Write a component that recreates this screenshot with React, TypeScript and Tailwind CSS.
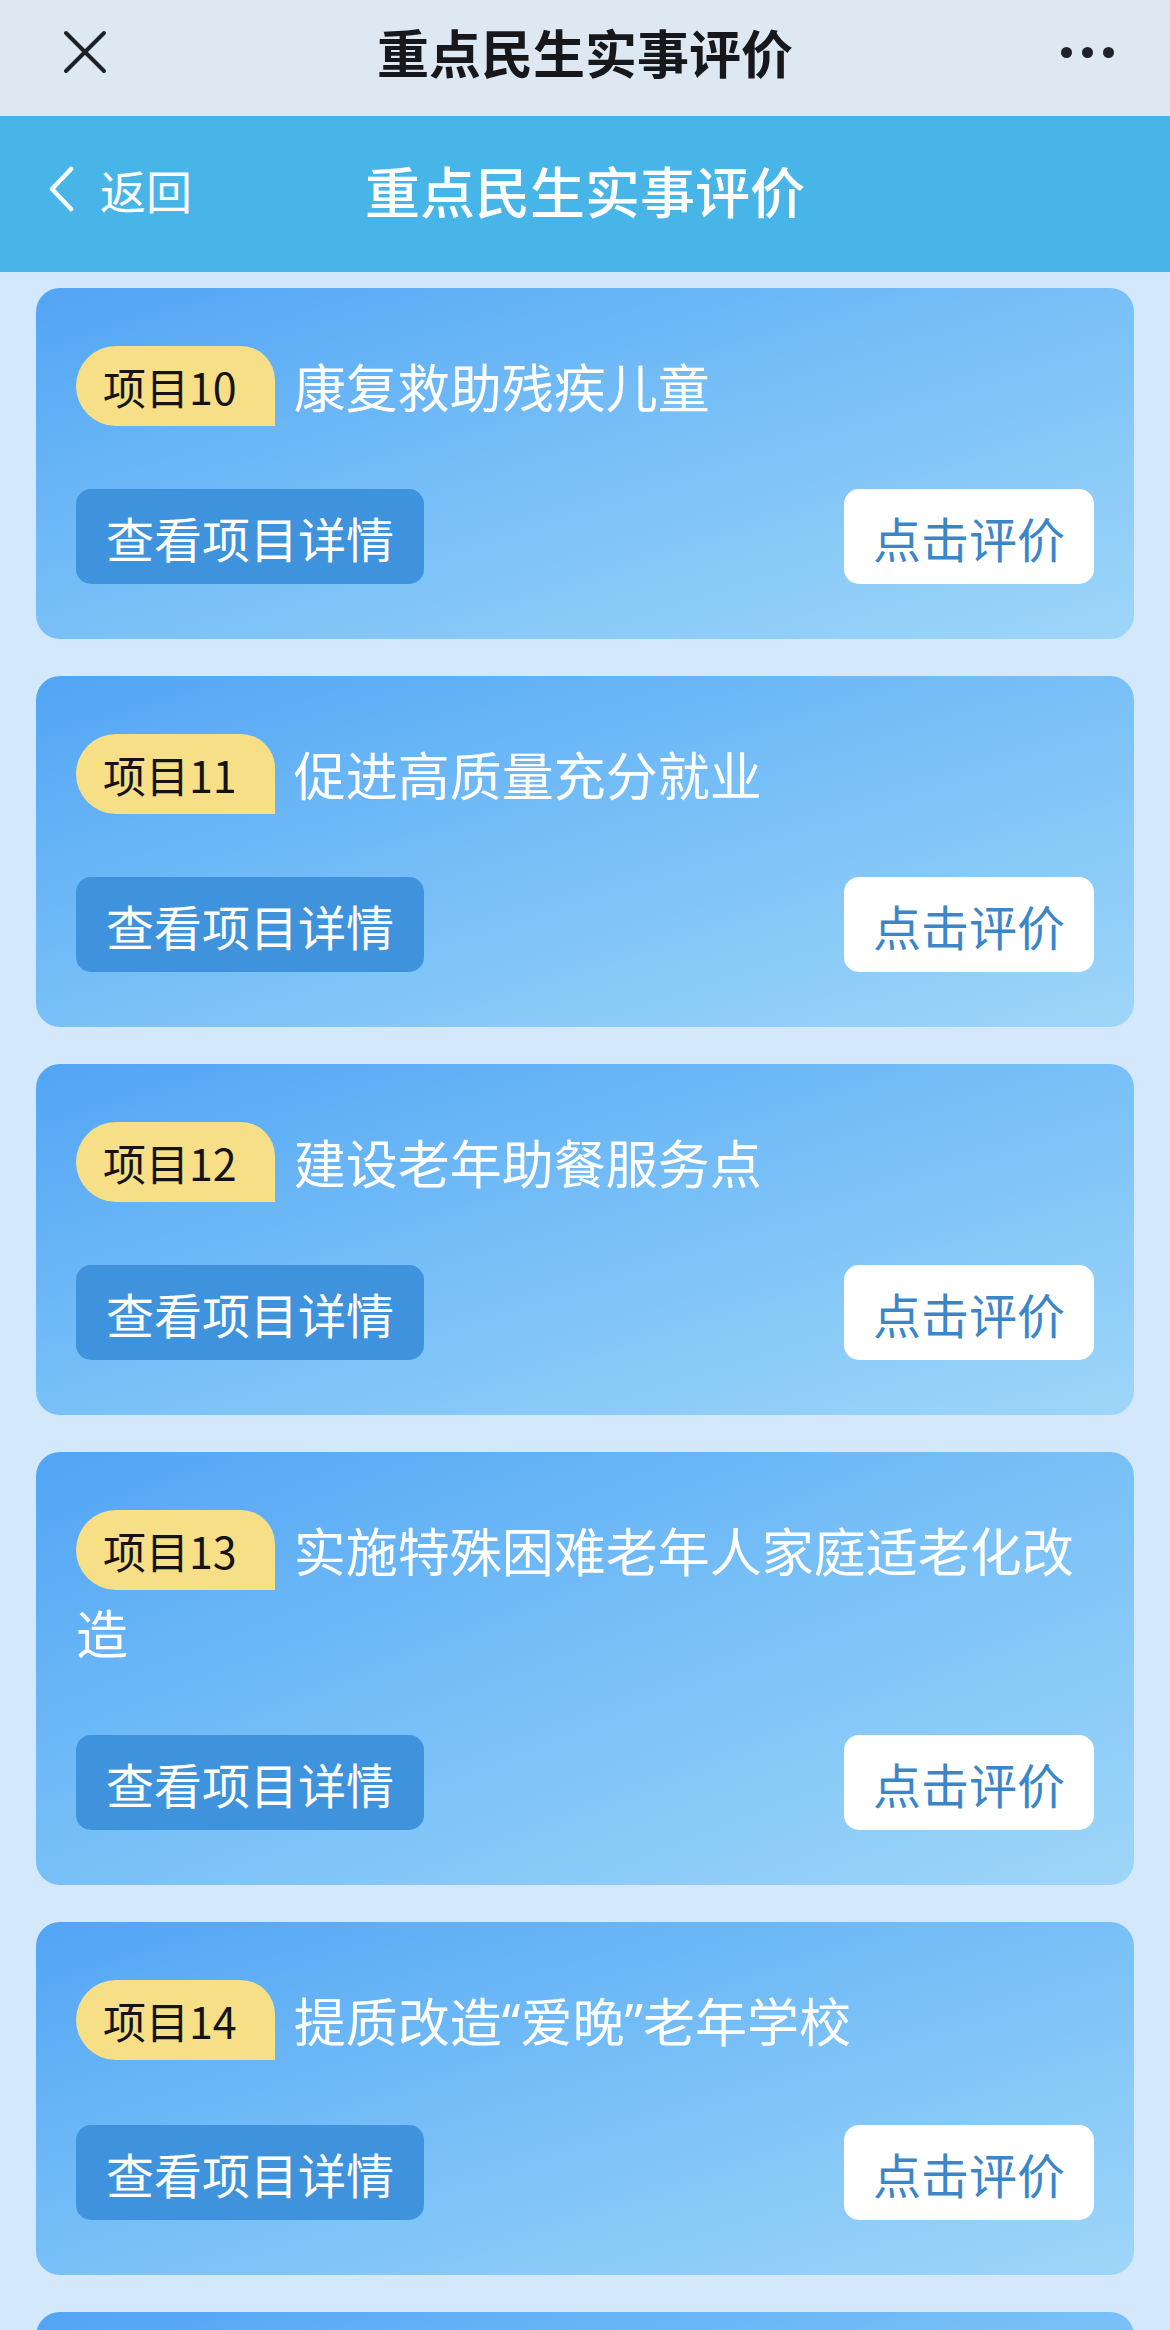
import * as React from "react"

interface Project {
  no: number
  title: React.ReactNode
}

const q = (c: string) => <span style={{ fontFamily: '"Noto Sans", sans-serif' }}>{c}</span>

const projects: Project[] = [
  { no: 10, title: "康复救助残疾儿童" },
  { no: 11, title: "促进高质量充分就业" },
  { no: 12, title: "建设老年助餐服务点" },
  { no: 13, title: "实施特殊困难老年人家庭适老化改造" },
  { no: 14, title: <>提质改造{q("“")}爱晚{q("”")}老年学校</> },
  { no: 15, title: "推进城市社区嵌入式服务设施建设" },
]

const font = { fontFamily: '"Noto Sans CJK SC", "Noto Sans", sans-serif' }

function ProjectCard({ item }: { item: Project }) {
  return (
    <div className="mx-[36px] rounded-[24px] bg-linear-to-br from-[#52a5f5] via-[#78c0f7] to-[#9ed6f8] px-[40px] pt-[57px] pb-[55px]">
      <p className="text-[52px] leading-[82px] text-white">
        <span className="mt-[1px] mr-[19px] inline-flex h-[80px] items-center rounded-tl-[40px] rounded-bl-[40px] rounded-tr-[34px] bg-[#f6df86] pl-[27px] pr-[38px] align-top text-[43px] leading-none text-[#141414]">
          项目{item.no}
        </span>
        {item.title}
      </p>
      <div className="mt-[62px] flex items-center justify-between">
        <button className="flex h-[95px] items-center rounded-[15px] bg-[#3f93dd] px-[30px] text-[48px] text-white">
          查看项目详情
        </button>
        <button className="flex h-[95px] items-center rounded-[15px] bg-white px-[29px] text-[48px] text-[#3a86c9]">
          点击评价
        </button>
      </div>
    </div>
  )
}

export default function App() {
  return (
    <div className="min-h-[2330px] w-[1170px] bg-[#d3e8fb]" style={font}>
      {/* top bar */}
      <div className="grid h-[116px] grid-cols-[1fr_auto_1fr] items-center bg-[#dde8f2] px-[62px] pb-[12px]">
        <svg width="44" height="44" viewBox="0 0 44 44" className="ml-[1px]">
          <path d="M3 3 L41 41 M41 3 L3 41" stroke="#1f2329" strokeWidth="4" strokeLinecap="round" />
        </svg>
        <div className="text-[52px] font-bold leading-none text-[#16181b]">重点民生实事评价</div>
        <div className="mr-[-6px] flex justify-end gap-[10px]">
          <span className="h-[11px] w-[11px] rounded-full bg-[#1f2329]" />
          <span className="h-[11px] w-[11px] rounded-full bg-[#1f2329]" />
          <span className="h-[11px] w-[11px] rounded-full bg-[#1f2329]" />
        </div>
      </div>

      {/* blue header */}
      <div className="grid h-[156px] grid-cols-[1fr_auto_1fr] items-center bg-[#48b5e9] pb-[10px] pl-[48px] pr-[48px]">
        <div className="flex items-center gap-[26px] text-white">
          <svg width="26" height="46" viewBox="0 0 26 46">
            <path d="M23 3 L4 23 L23 43" fill="none" stroke="#ffffff" strokeWidth="4.5" strokeLinecap="round" strokeLinejoin="round" />
          </svg>
          <span className="text-[46px] leading-none">返回</span>
        </div>
        <div className="text-[55px] font-medium leading-none text-white">重点民生实事评价</div>
        <div />
      </div>

      {/* list */}
      <div className="flex flex-col gap-[37px] pt-[16px]">
        {projects.map((p) => (
          <ProjectCard key={p.no} item={p} />
        ))}
      </div>
    </div>
  )
}
